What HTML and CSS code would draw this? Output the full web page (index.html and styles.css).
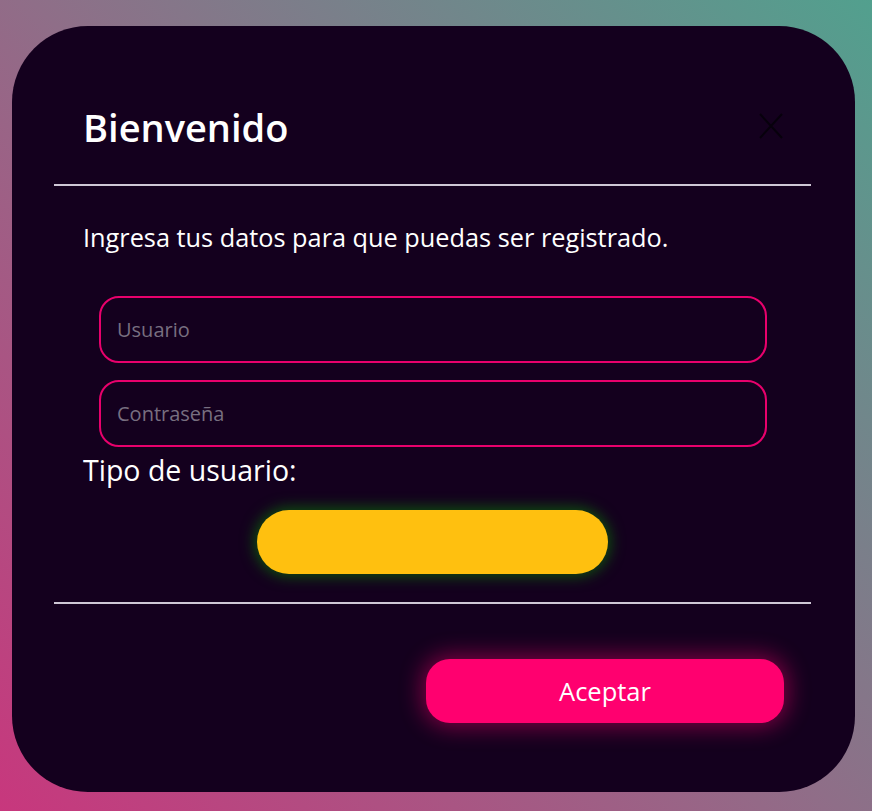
FILE: index.html
```html
<!DOCTYPE html>
<html lang="es">
<head>
<meta charset="utf-8">
<title>Registro</title>
<link rel="stylesheet" href="styles.css">
</head>
<body>
<div class="modal">
  <div class="modal-header">
    <h1 class="modal-title">Bienvenido</h1>
    <button class="close-btn" aria-label="Cerrar">
      <svg width="26" height="28" viewBox="0 0 26 28"><path d="M2 2 L24 26 M24 2 L2 26" stroke="#07000c" stroke-width="2" fill="none"/></svg>
    </button>
  </div>
  <div class="divider"></div>
  <div class="modal-body">
    <p class="intro">Ingresa tus datos para que puedas ser registrado.</p>
    <div class="fields">
      <input class="field" type="text" placeholder="Usuario">
      <input class="field" type="password" placeholder="Contraseña">
    </div>
    <p class="type-label">Tipo de usuario:</p>
    <div class="type-row">
      <button class="type-btn"></button>
    </div>
  </div>
  <div class="divider"></div>
  <div class="modal-footer">
    <button class="accept-btn">Aceptar</button>
  </div>
</div>
</body>
</html>
```
FILE: styles.css
```css
* { box-sizing: border-box; }
html, body { height: 100%; }
body {
  margin: 0;
  font-family: "Open Sans", "Noto Sans", sans-serif;
  background: linear-gradient(45deg, #c8377d 0%, #8f6e88 50%, #52a08e 100%);
  display: flex;
  align-items: flex-start;
  padding: 26px 17px 19px 12px;
}
.modal {
  width: 843px;
  height: 766px;
  background: #14001e;
  border-radius: 76px;
  padding: 0 44px 0 42px;
  display: flex;
  flex-direction: column;
}
.modal-header {
  height: 158px;
  display: flex;
  align-items: center;
  justify-content: space-between;
  padding: 44px 27px 0 29px;
}
.modal-title {
  margin: 0;
  color: #fff;
  font-size: 38px;
  font-weight: 600;
  line-height: 48px;
}
.close-btn {
  background: none;
  border: 0;
  padding: 0;
  width: 26px;
  height: 28px;
  margin-top: -2px;
}
.close-btn svg { display: block; }
.divider {
  height: 2px;
  background: #cfc7d6;
  flex: none;
}
.modal-body {
  padding: 0 0 0 29px;
  height: 416px;
  flex: none;
}
.intro {
  margin: 0;
  padding-top: 34px;
  color: #fff;
  font-size: 25.3px;
  line-height: 34px;
}
.fields {
  display: flex;
  flex-direction: column;
  gap: 17px;
  padding: 0 44px 0 16px;
  margin-top: 42px;
}
.field {
  height: 67px;
  border: 2.5px solid #e8006c;
  border-radius: 20px;
  background: transparent;
  padding: 0 16px;
  font-family: inherit;
  font-size: 20px;
  color: #fff;
  outline: none;
}
.field::placeholder { color: #786f80; }
.type-label {
  margin: 4px 0 0;
  color: #fff;
  font-size: 28.5px;
  line-height: 38px;
}
.type-row {
  display: flex;
  justify-content: center;
  margin-top: 21px;
  margin-left: -29px;
}
.type-btn {
  width: 351px;
  height: 64px;
  border: 0;
  border-radius: 32px;
  background: #ffc00f;
  box-shadow: 0 0 14px 3px rgba(14, 80, 14, 0.95);
}
.modal-footer {
  display: flex;
  justify-content: flex-end;
  padding: 55px 27px 0 0;
}
.accept-btn {
  width: 358px;
  height: 64px;
  border: 0;
  border-radius: 24px;
  background: #ff006f;
  color: #fff;
  font-family: inherit;
  font-size: 25.5px;
  box-shadow: 0 0 22px 4px rgba(255, 0, 111, 0.45);
}
```
